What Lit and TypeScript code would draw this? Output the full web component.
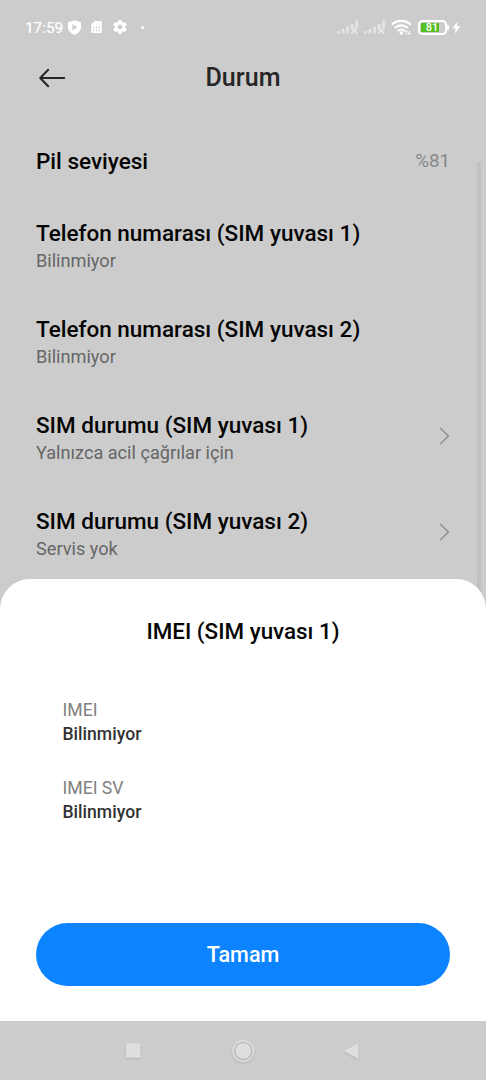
import { LitElement, html, css, svg, nothing } from "lit";
import { customElement, property } from "lit/decorators.js";

@customElement("status-bar")
class StatusBar extends LitElement {
  static styles = css`
    :host { display: block; height: 54px; }
    .bar { display: flex; align-items: center; height: 54px; padding: 0 25px 0 25px; box-sizing: border-box; color: #fff; }
    .time { font-size: 15.5px; line-height: 20px; width: 38px; white-space: nowrap; letter-spacing: -0.1px; padding-top: 1px; -webkit-text-stroke: 0.2px #fff; }
    .left { display: flex; align-items: center; flex: 1; }
    .right { display: flex; align-items: center; }
    svg { display: block; }
    .shield { margin-left: 4px; }
    .sim { margin-left: 8px; }
    .gear { margin-left: 10px; }
    .dot { width: 3px; height: 3px; border-radius: 50%; background: #fff; margin-left: 14px; }
    .signal { margin-right: 5px; }
    .battery { margin-left: 6px; display: flex; align-items: center; }
    .cell { width: 29px; height: 15px; box-sizing: border-box; border: 2px solid #fff; border-radius: 4.5px; padding: 1px; display: flex; position: relative; }
    .fill { background: #53bf22; border-radius: 1px; }
    .level { position: absolute; inset: 0; font-size: 11px; line-height: 11.5px; font-weight: 500; text-align: center; }
    .cap { width: 2px; height: 5px; background: #fff; border-radius: 0 1px 1px 0; margin-left: 0.5px; }
    .bolt { margin-left: 3px; }
  `;

  @property({ type: Number }) level = 81;

  private signal() {
    return html`<svg class="signal" width="22" height="14" viewBox="0 0 22 14">
      <g fill="#fff" opacity="0.45">
        <rect x="0" y="11" width="2.9" height="2.5" rx=".6" /><rect x="4.600" y="9" width="2.9" height="4.500" rx=".6" />
        <rect x="9.200" y="6.500" width="2.9" height="7" rx=".6" /><rect x="13.600" y="4" width="2.900" height="4" rx=".6" />
        <rect x="18.200" y="0.500" width="2.900" height="6.500" rx=".6" />
      </g>
      <path d="M14.200 7.500l6 6M20.200 7.500l-6 6" stroke="#fff" stroke-opacity=".5" stroke-width="2" />
    </svg>`;
  }

  render() {
    return html`<div class="bar">
      <div class="left">
        <span class="time">17:59</span>
        <svg class="shield" width="15" height="15" viewBox="0 0 15 15">
          <path fill="#fff" fill-rule="evenodd" d="M7.500.2L14 2.300V7c0 3.900-2.900 6.600-6.500 7.900C3.900 13.600 1 10.900 1 7V2.300zM5.400 4.200v6L10.600 7.200z" />
        </svg>
        <svg class="sim" width="13" height="14" viewBox="0 0 12 14">
          <path fill="#fff" d="M4.300 1H10.300Q11.300 1 11.300 2V12Q11.300 13 10.300 13H1.700Q.7 13 .7 12V4.600z" />
          <path stroke="#ccc" stroke-width="1.100" d="M3.300 6.500v1.500M3.300 9.300v2M6 6.500v2M6 9.800v1.500M8.700 6.500v1.500M8.700 9.300v2" />
        </svg>
        <svg class="gear" width="14" height="14" viewBox="2 2 20 20">
          <path fill="#fff" stroke="#fff" stroke-width=".5" d="M19.140 12.940c.04-.3.060-.61.060-.94 0-.32-.02-.64-.07-.94l2.030-1.580c.18-.14.230-.41.120-.61l-1.920-3.320c-.12-.22-.37-.29-.59-.22l-2.390.96c-.5-.38-1.030-.7-1.620-.94l-.36-2.540c-.04-.24-.24-.41-.48-.41h-3.840c-.24 0-.43.17-.47.41l-.36 2.540c-.59.24-1.130.57-1.620.94l-2.390-.96c-.22-.08-.47 0-.59.22L2.740 8.870c-.12.210-.08.470.120.610l2.030 1.580c-.05.300-.09.630-.09.940s.02.640.070.940l-2.030 1.580c-.18.140-.23.410-.12.610l1.920 3.320c.12.220.370.290.590.220l2.390-.96c.5.380 1.030.700 1.620.940l.36 2.540c.05.240.240.410.480.410h3.840c.24 0 .44-.17.470-.41l.36-2.540c.59-.24 1.130-.56 1.620-.94l2.390.96c.22.080.470 0 .59-.22l1.920-3.320c.12-.22.070-.47-.12-.61l-2.010-1.580zM12 15.600c-1.980 0-3.600-1.620-3.600-3.600s1.620-3.600 3.600-3.600 3.600 1.620 3.600 3.600-1.620 3.600-3.600 3.600z" />
        </svg>
        <span class="dot"></span>
      </div>
      <div class="right">
        ${this.signal()}${this.signal()}
        <svg width="21" height="16" viewBox="0 0 21 16">
          <g fill="none" stroke="#fff" stroke-width="2.200">
            <path d="M.8 5.800a13.600 13.600 0 0 1 19 0" /><path d="M3.800 9a9.200 9.200 0 0 1 13 0" /><path d="M6.800 12a5 5 0 0 1 7 0" />
          </g>
          <circle cx="10.300" cy="14" r="1.800" fill="#fff" />
          <path fill="#fff" d="M15.300 11l1.500 2h-1v2.500h-1V13h-1zM18.300 16l-1.500-2h1v-2.500h1V14h1z" />
        </svg>
        <div class="battery">
          <div class="cell"><span class="fill" style="width:${this.level}%"></span><span class="level">${this.level}</span></div>
          <span class="cap"></span>
        </div>
        <svg class="bolt" width="9" height="13" viewBox="0 0 9 13"><path fill="#fff" d="M5.600.5L.4 7.300h3.200L2.900 12.500 8.600 5.300H5z" /></svg>
      </div>
    </div>`;
  }
}

@customElement("setting-row")
class SettingRow extends LitElement {
  static styles = css`
    :host { display: block; }
    .row { display: flex; align-items: center; height: 96px; padding: 0 36px; box-sizing: border-box; }
    .single { height: 72px; }
    .text { flex: 1; padding-top: 2px; }
    .title { font-size: 22.5px; line-height: 28px; font-weight: 500; color: #050505; white-space: nowrap; }
    .sub { font-size: 18.15px; line-height: 24px; height: 22px; padding-top: 2px; color: #666; }
    .value { font-size: 18.8px; line-height: 24px; color: #888; padding-top: 2px; }
    svg { display: block; }
  `;
  @property() label = "";
  @property() sub = "";
  @property() value = "";
  @property({ type: Boolean }) arrow = false;

  render() {
    return html`<div class="row ${this.sub ? "" : "single"}">
      <div class="text">
        <div class="title">${this.label}</div>
        ${this.sub ? html`<div class="sub">${this.sub}</div>` : nothing}
      </div>
      ${this.value ? html`<div class="value">${this.value}</div>` : nothing}
      ${this.arrow
        ? html`<svg width="11" height="18" viewBox="0 0 11 18"><path d="M1.400 1.200L9.400 9 1.400 16.800" fill="none" stroke="#8e8e8e" stroke-width="1.500" /></svg>`
        : nothing}
    </div>`;
  }
}

@customElement("app-root")
class AppRoot extends LitElement {
  static styles = css`
    :host { display: block; font-family: Roboto, "Liberation Sans", sans-serif; }
    .screen { position: relative; height: 1080px; background: #ccc; overflow: hidden; display: flex; flex-direction: column; }
    .header { display: grid; grid-template-columns: 78px 1fr 78px; align-items: center; height: 48px; }
    .header svg { display: block; margin-left: 38px; }
    .heading { font-size: 25px; line-height: 32px; font-weight: 500; text-align: center; color: #262626; letter-spacing: 0.1px; }
    .list { padding-top: 22px; flex: 1; }
    .scroll { position: absolute; right: 5px; top: 162px; width: 4px; height: 440px; border-radius: 2px; background: #c0c0c0; }
    .sheet { position: absolute; left: 0; right: 0; bottom: 59px; height: 442px; box-sizing: border-box; padding: 37px 36px 35.5px; background: #fff; border-radius: 30px 30px 0 0; display: flex; flex-direction: column; }
    .sheet-title { font-size: 22.4px; line-height: 30px; font-weight: 500; text-align: center; color: #050505; }
    .fields { flex: 1; padding: 52px 26.5px 0; display: flex; flex-direction: column; gap: 30px; }
    .key { font-size: 17.6px; line-height: 24px; color: #808080; }
    .val { font-size: 17.6px; line-height: 24px; font-weight: 500; color: #333; }
    .ok { font: 500 21.6px/63px Roboto, "Liberation Sans", sans-serif; height: 63px; padding: 0; border: 0; border-radius: 32px; background: #0d84ff; color: #fff; text-align: center; }
    .nav { height: 59px; display: flex; justify-content: center; align-items: center; gap: 85px; padding-right: 1px; }
    .nav svg { display: block; filter: drop-shadow(0 1px 1px rgba(0, 0, 0, 0.13)); }
  `;

  private rows = [
    { label: "Pil seviyesi", value: "%81" },
    { label: "Telefon numarası (SIM yuvası 1)", sub: "Bilinmiyor" },
    { label: "Telefon numarası (SIM yuvası 2)", sub: "Bilinmiyor" },
    { label: "SIM durumu (SIM yuvası 1)", sub: "Yalnızca acil çağrılar için", arrow: true },
    { label: "SIM durumu (SIM yuvası 2)", sub: "Servis yok", arrow: true },
  ];
  private fields = [
    ["IMEI", "Bilinmiyor"],
    ["IMEI SV", "Bilinmiyor"],
  ];

  private navIcon(shape: unknown) {
    return html`<svg width="24" height="24" viewBox="0 0 24 24" fill="#dedede">${shape}</svg>`;
  }

  render() {
    return html`<div class="screen">
      <status-bar></status-bar>
      <div class="header">
        <svg width="28" height="20" viewBox="0 0 28 20"><path d="M10.200 1.700L2.200 10l8 8.300M2.400 10H26.200" fill="none" stroke="#262626" stroke-width="2" stroke-linecap="round" stroke-linejoin="round" /></svg>
        <div class="heading">Durum</div>
      </div>
      <div class="list">
        ${this.rows.map((r) => html`<setting-row .label=${r.label} .sub=${r.sub ?? ""} .value=${r.value ?? ""} .arrow=${!!r.arrow}></setting-row>`)}
      </div>
      <div class="nav">
        ${this.navIcon(svg`<rect x="4" y="4.200" width="14.500" height="14.500" />`)}
        ${this.navIcon(svg`<circle cx="12.300" cy="12" r="7.700" /><circle cx="12.300" cy="12" r="10.300" fill="none" stroke="#dedede" stroke-width="1.500" />`)}
        ${this.navIcon(svg`<path d="M4 12L18.500 3.800V20.200z" />`)}
      </div>
      <div class="scroll"></div>
      <div class="sheet">
        <div class="sheet-title">IMEI (SIM yuvası 1)</div>
        <div class="fields">
          ${this.fields.map(([k, v]) => html`<div><div class="key">${k}</div><div class="val">${v}</div></div>`)}
        </div>
        <button class="ok">Tamam</button>
      </div>
    </div>`;
  }
}
